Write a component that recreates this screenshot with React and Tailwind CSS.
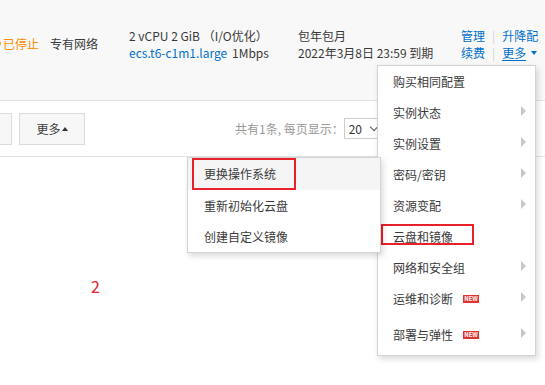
import React from "react"

const font = { fontFamily: '"Noto Sans CJK SC", "Noto Sans", sans-serif' }

const mainItems = [
  { label: "购买相同配置" },
  { label: "实例状态", arrow: true },
  { label: "实例设置", arrow: true },
  { label: "密码/密钥", arrow: true },
  { label: "资源变配", arrow: true },
  { label: "云盘和镜像", boxed: true },
  { label: "网络和安全组", arrow: true },
  { label: "运维和诊断", arrow: true, isNew: true },
  { label: "部署与弹性", arrow: true, isNew: true, last: true },
]

const subItems = ["更换操作系统", "重新初始化云盘", "创建自定义镜像"]

function Caret() {
  return <span className="block w-0 h-0 border-y-[5px] border-y-transparent border-l-[5px] border-l-[#c8c8c8]" />
}

function NewBadge() {
  return (
    <span className="ml-[10px] inline-flex items-center justify-center w-[16px] h-[8px] bg-[#e0332f] text-white text-[6px] font-bold leading-none">
      NEW
    </span>
  )
}

export default function App() {
  return (
    <div className="relative w-[545px] h-[385px] overflow-hidden bg-white text-[12px] text-[#3a3a3a]" style={font}>
      {/* instance row */}
      <div className="h-[101px] bg-[#f8f8f8] border-b border-[#e3e3e3] flex pt-[27px] leading-[17px]">
        <div className="w-[50px] flex items-start">
          <div className="flex items-center -ml-[6px] mt-[8px] gap-[2px] text-[#ff8a00]">
            <span className="w-[7px] h-[7px] rounded-full border border-[#ff8a00]" />
            <span>已停止</span>
          </div>
        </div>
        <div className="w-[79px] pt-[8px]">专有网络</div>
        <div className="w-[169px]">
          <div>2 vCPU 2 GiB （I/O优化）</div>
          <div className="flex">
            <span className="text-[#0070cc] w-[103px]">ecs.t6-c1m1.large</span>
            <span>1Mbps</span>
          </div>
        </div>
        <div className="w-[163px]">
          <div>包年包月</div>
          <div>2022年3月8日 23:59 到期</div>
        </div>
        <div className="text-[#0070cc]">
          <div className="flex items-center">
            <span>管理</span>
            <span className="mx-[7px] text-[#d0d0d0]">|</span>
            <span>升降配</span>
          </div>
          <div className="flex items-center">
            <span>续费</span>
            <span className="mx-[7px] text-[#d0d0d0]">|</span>
            <span className="border-b border-[#0070cc] leading-[15px]">更多</span>
            <span className="ml-[5px] w-0 h-0 border-x-[3.5px] border-x-transparent border-t-[4px] border-t-[#0070cc]" />
          </div>
        </div>
      </div>

      {/* toolbar */}
      <div className="h-[56px] border-b border-[#e3e3e3] flex items-center">
        <div className="w-[12px] h-[32px] border border-l-0 border-[#dcdcdc] bg-[#f7f7f7]" />
        <button className="ml-[7px] w-[66px] h-[32px] border border-[#dcdcdc] bg-[#f7f7f7] flex items-center justify-center">
          更多
          <span className="ml-[1px] w-0 h-0 border-x-[3.5px] border-x-transparent border-b-[4px] border-b-[#333]" />
        </button>
        <div className="ml-[150px] flex items-center text-[#999]">
          <span>共有1条, 每页显示：</span>
          <div className="w-[44px] h-[21px] border border-[#ccc] bg-white flex items-center pl-[4px] text-[#333]">
            <span>20</span>
            <span className="ml-[9px] w-[6px] h-[6px] border-r-[1.5px] border-b-[1.5px] border-[#555] rotate-45 -mt-[3px]" />
          </div>
        </div>
      </div>

      <div className="pl-[91px] pt-[121px] text-[16px] leading-none text-[#e8202a]">2</div>

      {/* main dropdown */}
      <div className="absolute left-[377px] top-[65px] w-[159px] bg-white border border-[#d4d4d4] shadow-[2px_3px_6px_rgba(0,0,0,0.15)]">
        {mainItems.map((it) => (
          <div
            key={it.label}
            className={`relative flex items-center pl-[15px] pr-[9px] ${it.last ? "h-[41px]" : "h-[31px]"}`}
          >
            <span>{it.label}</span>
            {it.isNew && <NewBadge />}
            {it.arrow && (
              <span className="ml-auto -mt-[3px]">
                <Caret />
              </span>
            )}
            {it.boxed && (
              <span className="absolute left-[3px] top-[3px] w-[93px] h-[21px] border-2 border-[#e8202a]" />
            )}
          </div>
        ))}
      </div>

      {/* submenu */}
      <div className="absolute left-[187px] top-[157px] w-[194px] bg-white border border-[#d4d4d4] shadow-[2px_3px_6px_rgba(0,0,0,0.15)]">
        {subItems.map((s, i) => (
          <div
            key={s}
            className={`relative flex items-center pl-[16px] ${i === 0 ? "h-[32px] bg-[#f5f5f5]" : i === 1 ? "h-[32px]" : "h-[30px]"}`}
          >
            {s}
            {i === 0 && (
              <span className="absolute left-[4px] top-0 w-[104px] h-[32px] border-2 border-[#e8202a]" />
            )}
          </div>
        ))}
      </div>
    </div>
  )
}
